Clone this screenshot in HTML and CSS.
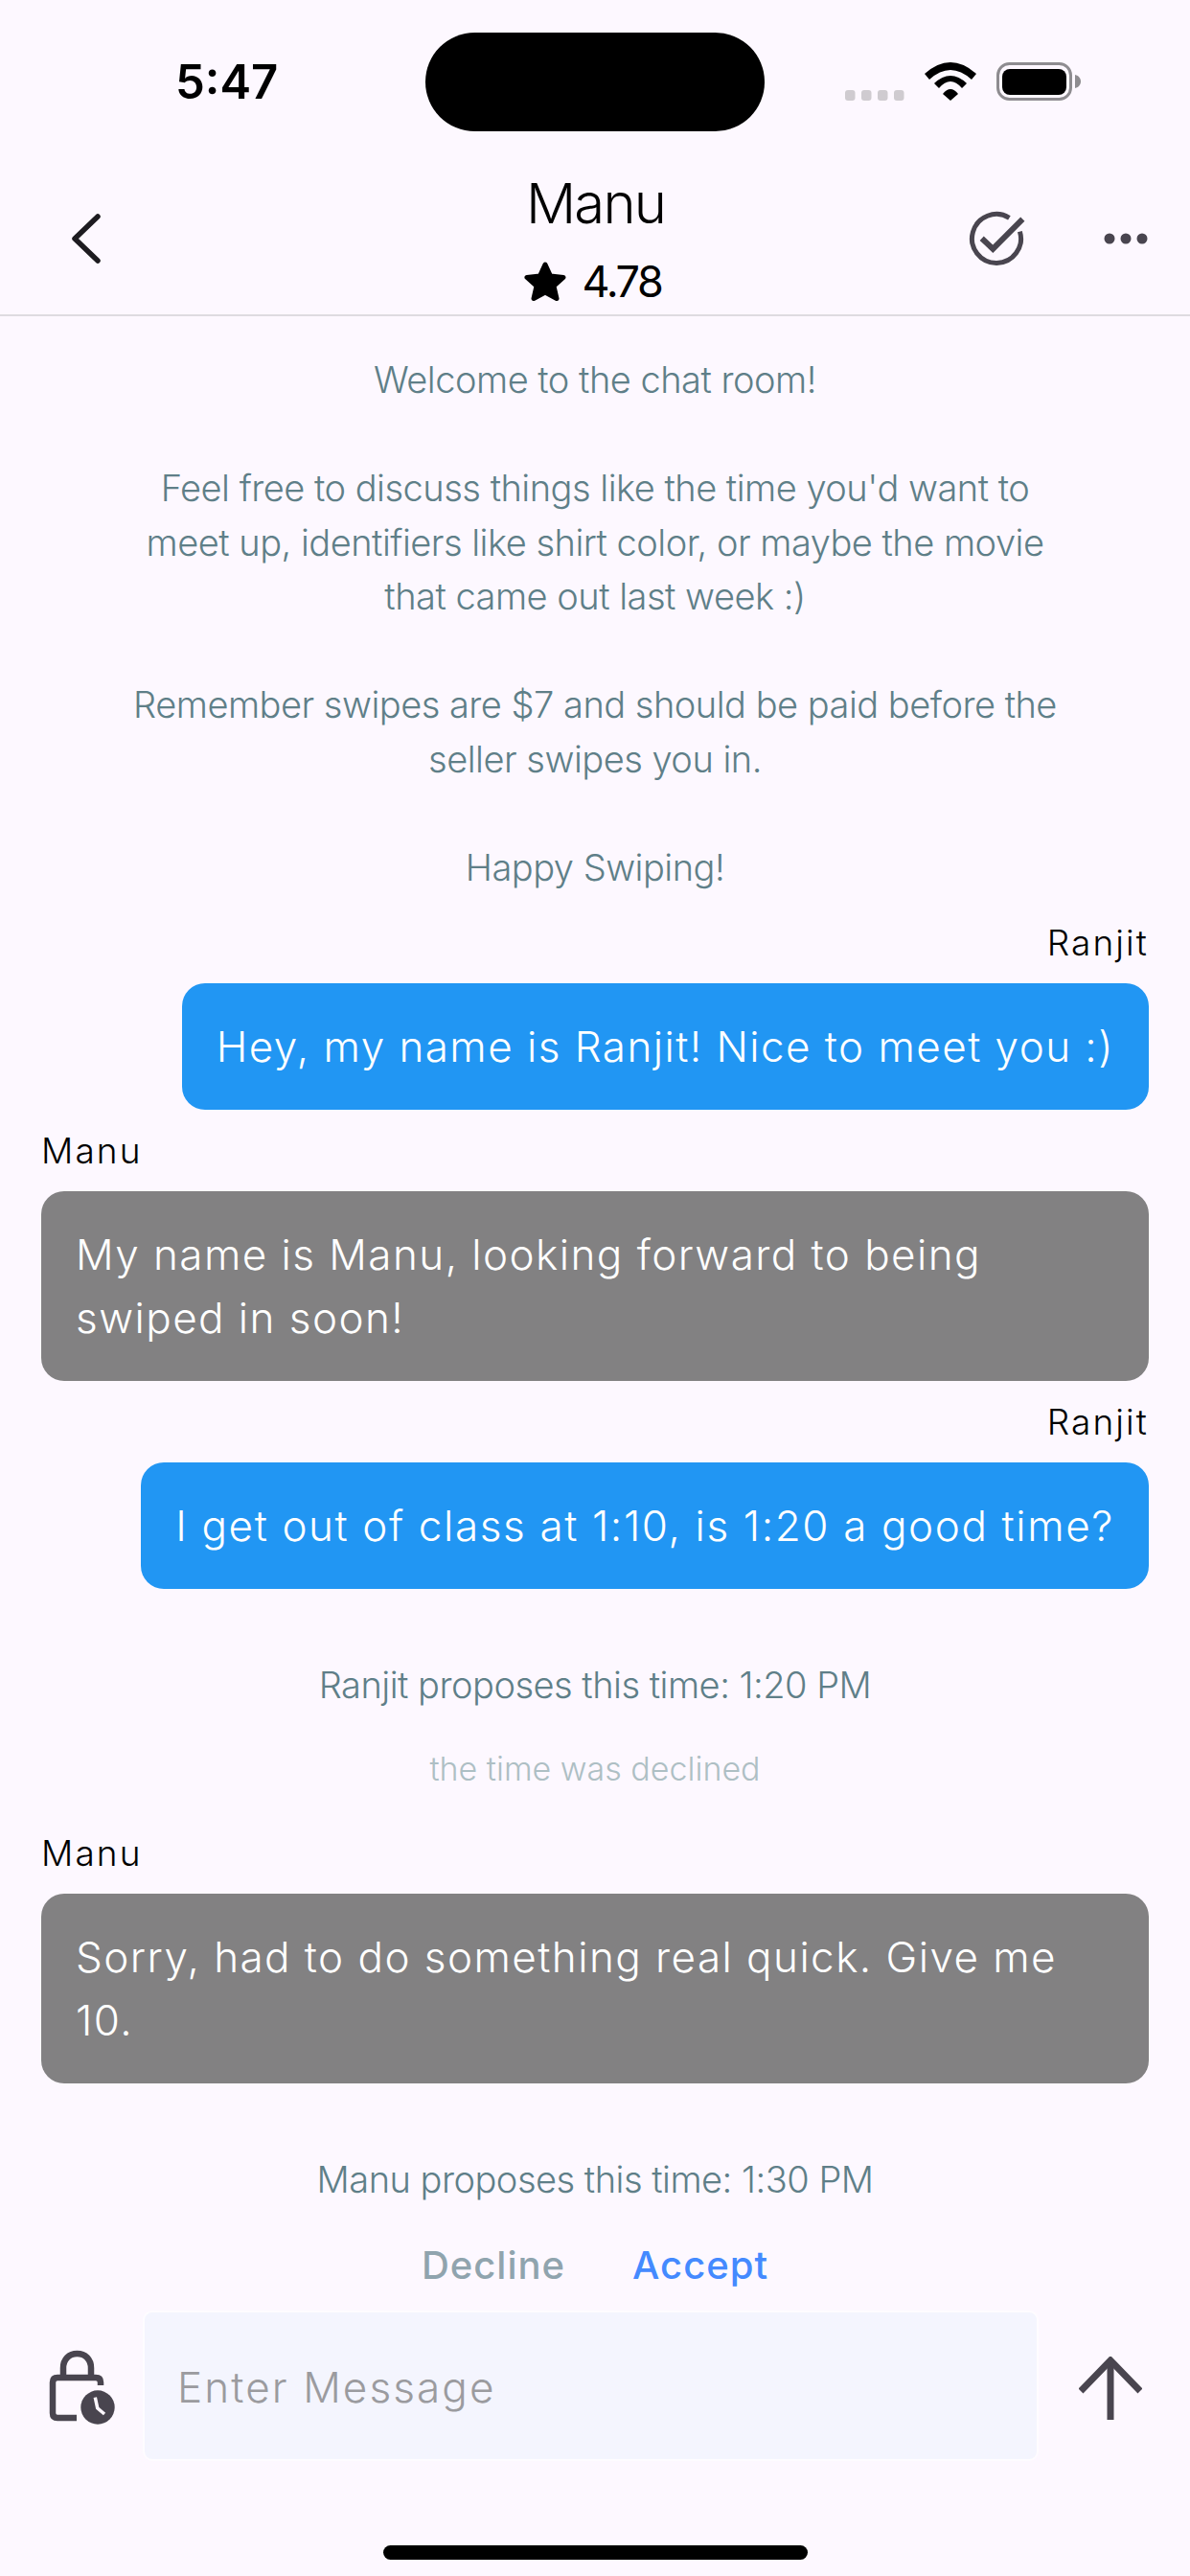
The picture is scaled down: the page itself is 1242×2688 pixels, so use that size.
FILE: index.html
```html
<!DOCTYPE html>
<html lang="en">
<head>
    <meta charset="UTF-8">
    <meta name="viewport" content="width=device-width, initial-scale=1.0">
    <title>Chat with Manu</title>
    <link rel="stylesheet" href="styles.css">
</head>
<body>
<div class="screen">

    <!-- Status bar -->
    <div class="status-bar">
        <div class="time">5:47</div>
        <div class="island"></div>
        <div class="status-icons">
            <svg class="signal" width="62" height="11" viewBox="0 0 62 11">
                <rect x="0" y="0" width="10.5" height="11" rx="3" fill="#cfcbd0"/>
                <rect x="17" y="0" width="10.5" height="11" rx="3" fill="#cfcbd0"/>
                <rect x="34" y="0" width="10.5" height="11" rx="3" fill="#cfcbd0"/>
                <rect x="51" y="0" width="10.5" height="11" rx="3" fill="#cfcbd0"/>
            </svg>
            <svg class="wifi" width="54" height="40" viewBox="0 0 54 40">
                <path d="M0 12 Q27 -12 54 12 L49 18 Q27 -2 5 18 Z" fill="#000"/>
                <path d="M10 22 Q27 6 44 22 L39 27 Q27 13 15 27 Z" fill="#000"/>
                <path d="M19 33 Q27 23 35 33 L27 40 Z" fill="#000"/>
            </svg>
            <svg class="battery" width="88" height="40" viewBox="0 0 88 40">
                <rect x="1.5" y="1.5" width="76" height="37" rx="12" fill="none" stroke="#8e8c90" stroke-width="3"/>
                <rect x="6" y="7" width="67" height="27" rx="8" fill="#000"/>
                <path d="M82 13 C86 14 88 17 88 20 C88 23 86 26 82 27 Z" fill="#8e8c90"/>
            </svg>
        </div>
    </div>

    <!-- Header -->
    <div class="top-bar">
        <svg class="back" width="36" height="58" viewBox="0 0 36 58">
            <path d="M30 6 L6 29 L30 52" fill="none" stroke="#1d1b20" stroke-width="5.5" stroke-linecap="round" stroke-linejoin="round"/>
        </svg>
        <div class="peer">
            <div class="peer-name">Manu</div>
            <div class="peer-rating">
                <svg width="44" height="42" viewBox="0 0 44 42">
                    <path d="M22 3 L27.5 15 L41 16.5 L31 25.5 L34 38.5 L22 32 L10 38.5 L13 25.5 L3 16.5 L16.5 15 Z" fill="#000" stroke="#000" stroke-width="5" stroke-linejoin="round"/>
                </svg>
                <span>4.78</span>
            </div>
        </div>
        <div class="top-actions">
            <svg width="60" height="60" viewBox="0 0 60 60">
                <path d="M43.4 8.3 A25.5 25.5 0 1 0 54.4 22.6" fill="none" stroke="#49454f" stroke-width="5"/>
                <path d="M14.7 29.7 L26.3 40.7 L57.3 9.7" fill="none" stroke="#49454f" stroke-width="6"/>
            </svg>
            <svg width="46" height="12" viewBox="0 0 46 12">
                <circle cx="6" cy="6" r="5.5" fill="#49454f"/>
                <circle cx="23" cy="6" r="5.5" fill="#49454f"/>
                <circle cx="40" cy="6" r="5.5" fill="#49454f"/>
            </svg>
        </div>
    </div>

    <!-- Messages -->
    <div class="chat">
        <div class="notice">
            <p>Welcome to the chat room!</p>
            <p>Feel free to discuss things like the time you'd want to<br>meet up, identifiers like shirt color, or maybe the movie<br>that came out last week :)</p>
            <p>Remember swipes are $7 and should be paid before the<br>seller swipes you in.</p>
            <p>Happy Swiping!</p>
        </div>

        <div class="msg mine">
            <div class="sender">Ranjit</div>
            <div class="bubble">Hey, my name is Ranjit! Nice to meet you :)</div>
        </div>
        <div class="msg">
            <div class="sender">Manu</div>
            <div class="bubble">My name is Manu, looking forward to being<br>swiped in soon!</div>
        </div>
        <div class="msg mine">
            <div class="sender">Ranjit</div>
            <div class="bubble has-digits">I get out of class at 1:10, is 1:20 a good time?</div>
        </div>

        <div class="proposal">Ranjit proposes this time: 1:20 PM</div>
        <div class="declined">the time was declined</div>

        <div class="msg after-declined">
            <div class="sender">Manu</div>
            <div class="bubble">Sorry, had to do something real quick. Give me<br>10.</div>
        </div>

        <div class="proposal">Manu proposes this time: 1:30 PM</div>
        <div class="choices">
            <span class="decline">Decline</span>
            <span class="accept">Accept</span>
        </div>
    </div>

    <!-- Input -->
    <div class="composer">
        <svg class="lock" width="72" height="82" viewBox="0 0 72 82">
            <path d="M16 30 V20 C16 11 22 5 30.5 5 C39 5 45 11 45 20 V30" fill="none" stroke="#49454f" stroke-width="6.5"/>
            <path d="M30 72 H10 Q5 72 5 67 V35 Q5 30 10 30 H50 Q55 30 55 35 V38" fill="none" stroke="#49454f" stroke-width="6.5"/>
            <circle cx="52" cy="61" r="17.7" fill="#49454f"/>
            <path d="M49.3 50.7 L51.7 61.7 L59 68" fill="none" stroke="#fdf8ff" stroke-width="3.5"/>
        </svg>
        <div class="message-box">Enter Message</div>
        <svg class="send" width="66" height="66" viewBox="0 0 66 66">
            <path d="M33 66 V4" fill="none" stroke="#49454f" stroke-width="7"/>
            <path d="M2 36 L33 4 L64 36" fill="none" stroke="#49454f" stroke-width="7"/>
        </svg>
    </div>

    <div class="home-bar"></div>
</div>
</body>
</html>
```

FILE: styles.css
```css
* {
    margin: 0;
    padding: 0;
    box-sizing: border-box;
}
body {
    font-family: 'Inter', sans-serif;
    background-color: #fdf8ff;
    color: #000;
}
.screen {
    width: 1242px;
    height: 2688px;
    overflow: hidden;
    display: flex;
    flex-direction: column;
}
.status-bar {
    height: 174px;
    padding-top: 34px;
    display: flex;
    align-items: flex-start;
}
.time {
    width: 444px;
    height: 103px;
    padding-left: 183px;
    font-size: 49px;
    font-weight: 600;
    line-height: 103px;
}
.island {
    width: 354px;
    height: 103px;
    border-radius: 52px;
    background-color: #000;
}
.status-icons {
    height: 71px;
    padding-left: 84px;
    padding-top: 31px;
    display: flex;
    align-items: flex-end;
    gap: 21px;
}
.top-bar {
    height: 156px;
    border-bottom: 2px solid #dedbe0;
    padding: 0 44px 0 72px;
    display: grid;
    grid-template-columns: 1fr auto 1fr;
    align-items: center;
}
.back {
    margin-top: -4px;
}
.peer {
    align-self: start;
    text-align: center;
    margin-left: -27px;
}
.peer-name {
    font-size: 58px;
    font-weight: 350;
    line-height: 76px;
    letter-spacing: -1.8px;
}
.peer-rating {
    display: flex;
    align-items: center;
    justify-content: center;
    gap: 17px;
    margin-right: 6px;
    font-size: 45px;
    font-weight: 400;
    line-height: 64px;
    letter-spacing: -2.4px;
    margin-top: 12px;
}
.top-actions {
    justify-self: end;
    display: flex;
    align-items: center;
    gap: 82px;
    margin-top: -4px;
}
.chat {
    height: 2081px;
    padding: 38px 43px 0;
}
.notice {
    text-align: center;
    color: #5f7f88;
    font-size: 38px;
    font-weight: 300;
    line-height: 56.5px;
    letter-spacing: -0.5px;
}
.notice p {
    margin-bottom: 56.5px;
}
.notice p:last-child {
    margin-bottom: 0;
}
.msg {
    margin-top: 18px;
    display: flex;
    flex-direction: column;
    align-items: flex-start;
}
.msg.mine {
    align-items: flex-end;
}
.notice + .msg {
    margin-top: 26px;
}
.msg.after-declined {
    margin-top: 38px;
}
.sender {
    font-size: 37px;
    font-weight: 300;
    line-height: 50px;
    letter-spacing: 2.1px;
    margin-bottom: 17px;
}
.bubble {
    padding: 33px 36px;
    border-radius: 24px;
    color: #fff;
    background-color: #828182;
    font-size: 44px;
    font-weight: 300;
    line-height: 66px;
    letter-spacing: 1.45px;
    width: 100%;
}
.mine .bubble {
    background-color: #2196f3;
    width: auto;
}
.bubble.has-digits {
    letter-spacing: 1.62px;
}
.proposal {
    margin-top: 72px;
    text-align: center;
    color: #5f7f88;
    font-size: 38px;
    font-weight: 300;
    line-height: 56px;
    letter-spacing: -0.5px;
}
.declined {
    margin-top: 35px;
    text-align: center;
    color: #aebfc4;
    font-size: 34px;
    font-weight: 300;
    line-height: 50px;
}
.choices {
    margin-top: 37px;
    display: flex;
    justify-content: center;
    gap: 70px;
    font-size: 40px;
    font-weight: 500;
    line-height: 50px;
    letter-spacing: 1px;
}
.decline {
    color: #90a4ae;
}
.accept {
    color: #448aff;
}
.composer {
    height: 157px;
    padding-left: 50px;
    display: flex;
    align-items: center;
}
.lock {
    margin-top: 4px;
}
.message-box {
    width: 935px;
    height: 157px;
    margin-left: 27px;
    margin-right: 42px;
    padding-left: 34px;
    border-radius: 10px;
    background-color: #f4f5fe;
    border: 2px solid #fefcff;
    color: #9b9b9f;
    font-size: 44px;
    font-weight: 300;
    line-height: 156px;
    letter-spacing: 2.1px;
}
.send {
    margin-top: 5px;
}
.home-bar {
    width: 443px;
    height: 15px;
    margin: 88px 0 0 400px;
    border-radius: 8px;
    background-color: #000;
}
```
